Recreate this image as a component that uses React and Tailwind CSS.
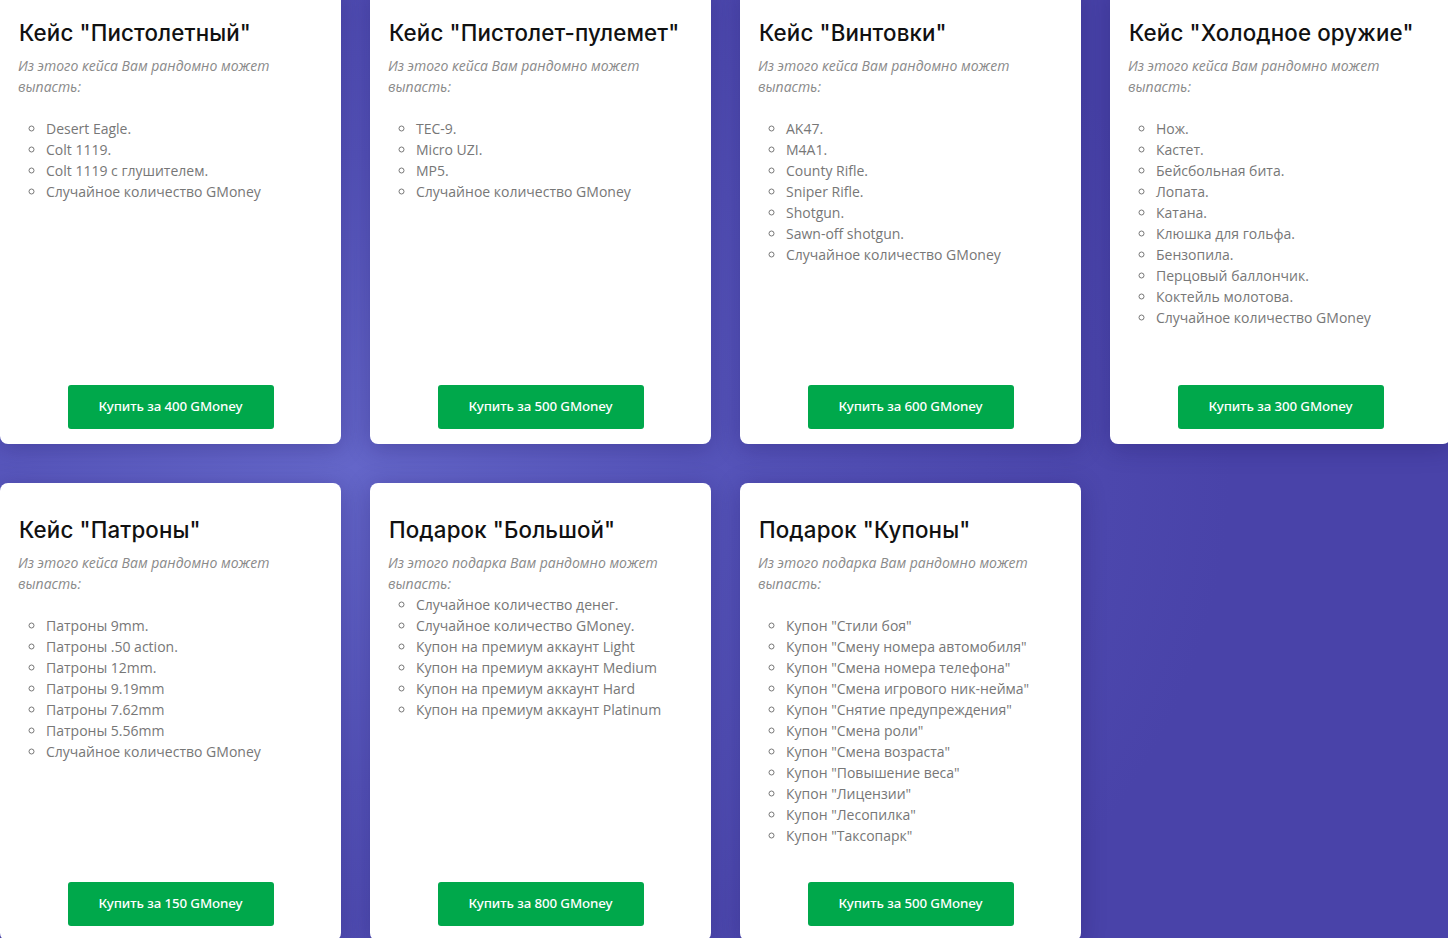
import React from 'react';

const cases = [
  {
    title: 'Кейс "Пистолетный"',
    desc: 'Из этого кейса Вам рандомно может выпасть:',
    items: ['Desert Eagle.', 'Colt 1119.', 'Colt 1119 с глушителем.', 'Случайное количество GMoney'],
    price: 400,
  },
  {
    title: 'Кейс "Пистолет-пулемет"',
    desc: 'Из этого кейса Вам рандомно может выпасть:',
    items: ['TEC-9.', 'Micro UZI.', 'MP5.', 'Случайное количество GMoney'],
    price: 500,
  },
  {
    title: 'Кейс "Винтовки"',
    desc: 'Из этого кейса Вам рандомно может выпасть:',
    items: ['AK47.', 'M4A1.', 'County Rifle.', 'Sniper Rifle.', 'Shotgun.', 'Sawn-off shotgun.', 'Случайное количество GMoney'],
    price: 600,
  },
  {
    title: 'Кейс "Холодное оружие"',
    desc: 'Из этого кейса Вам рандомно может выпасть:',
    items: [
      'Нож.',
      'Кастет.',
      'Бейсбольная бита.',
      'Лопата.',
      'Катана.',
      'Клюшка для гольфа.',
      'Бензопила.',
      'Перцовый баллончик.',
      'Коктейль молотова.',
      'Случайное количество GMoney',
    ],
    price: 300,
  },
  {
    title: 'Кейс "Патроны"',
    desc: 'Из этого кейса Вам рандомно может выпасть:',
    items: [
      'Патроны 9mm.',
      'Патроны .50 action.',
      'Патроны 12mm.',
      'Патроны 9.19mm',
      'Патроны 7.62mm',
      'Патроны 5.56mm',
      'Случайное количество GMoney',
    ],
    price: 150,
  },
  {
    title: 'Подарок "Большой"',
    desc: 'Из этого подарка Вам рандомно может выпасть:',
    tight: true,
    items: [
      'Случайное количество денег.',
      'Случайное количество GMoney.',
      'Купон на премиум аккаунт Light',
      'Купон на премиум аккаунт Medium',
      'Купон на премиум аккаунт Hard',
      'Купон на премиум аккаунт Platinum',
    ],
    price: 800,
  },
  {
    title: 'Подарок "Купоны"',
    desc: 'Из этого подарка Вам рандомно может выпасть:',
    items: [
      'Купон "Стили боя"',
      'Купон "Смену номера автомобиля"',
      'Купон "Смена номера телефона"',
      'Купон "Смена игрового ник-нейма"',
      'Купон "Снятие предупреждения"',
      'Купон "Смена роли"',
      'Купон "Смена возраста"',
      'Купон "Повышение веса"',
      'Купон "Лицензии"',
      'Купон "Лесопилка"',
      'Купон "Таксопарк"',
    ],
    price: 500,
  },
];

const CaseCard = ({ c }) => (
  <div className="flex h-[458px] flex-col rounded-lg bg-white px-[18px] pt-[33px] pb-[15px] shadow-[0_4px_24px_rgba(20,10,80,0.28)]">
    <h3 className="pl-px font-['Inter',sans-serif] text-[22.3px] font-medium leading-[28px] tracking-[0.15px] text-[#111]">
      {c.title}
    </h3>
    <p className="mt-[8px] font-['Open_Sans',sans-serif] text-[14px] italic leading-[21px] text-[#8a8a8a]">
      {c.desc}
    </p>
    <ul
      className={`${c.tight ? 'mt-0' : 'mt-[21px]'} list-[circle] pl-[28px] font-['Open_Sans',sans-serif] text-[14px] leading-[21px] text-[#777]`}
    >
      {c.items.map((it) => (
        <li key={it}>{it}</li>
      ))}
    </ul>
    <button className="mx-auto mt-auto h-[44px] w-[206px] rounded-[3px] bg-[#00a84b] font-['Noto_Sans',sans-serif] text-[13.3px] font-medium tracking-[-0.1px] text-white">
      Купить за {c.price} GMoney
    </button>
  </div>
);

export default function App() {
  return (
    <div className="h-[938px] w-full overflow-hidden bg-[radial-gradient(ellipse_900px_700px_at_330px_470px,#6567ca_0%,#5553b9_45%,#4943a9_100%)]">
      <div className="-mt-[14px] grid w-[1451px] grid-cols-[repeat(4,341px)] gap-x-[29px] gap-y-[39px]">
        {cases.map((c) => (
          <CaseCard key={c.title} c={c} />
        ))}
      </div>
    </div>
  );
}
